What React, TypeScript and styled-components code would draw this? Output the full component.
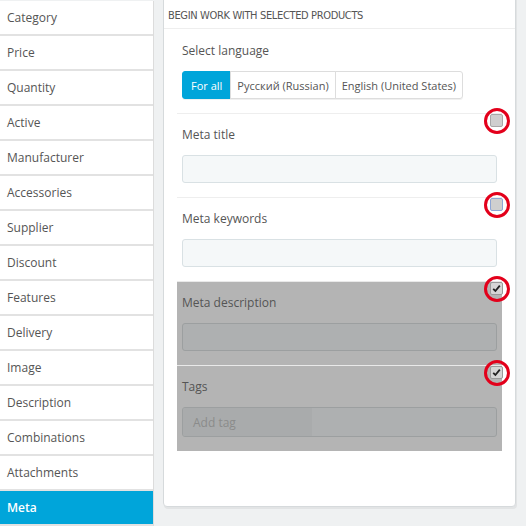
import React from "react";
import styled, { createGlobalStyle } from "styled-components";

const Global = createGlobalStyle`
  html, body { margin: 0; padding: 0; }
  body {
    background: #eff1f2;
    font-family: "Open Sans", "Noto Sans", sans-serif;
    font-size: 12px;
    color: #555;
    overflow: hidden;
  }
`;

const Page = styled.div`
  display: flex;
  width: 526px;
  height: 526px;
  overflow: hidden;
`;

const Sidebar = styled.nav`
  width: 153px;
  flex: none;
  background: #fff;
  border-right: 1px solid #dcdcdc;
  display: flex;
  flex-direction: column;
  margin-top: 1px;
`;

const NavItem = styled.div<{ $active?: boolean }>`
  height: 33px;
  flex: none;
  display: flex;
  align-items: center;
  padding-left: 7px;
  font-size: 12px;
  border-bottom: 2px solid #e2e2e2;
  background: ${(p) => (p.$active ? "#00a5da" : "#fff")};
  color: ${(p) => (p.$active ? "#fff" : "#555")};
  font-weight: ${(p) => (p.$active ? 600 : 400)};
`;

const Main = styled.main`
  flex: 1;
  padding: 0 10px 0 9px;
`;

const Panel = styled.section`
  margin-top: -2px;
  background: #fff;
  border: 1px solid #d6dadc;
  border-radius: 0 0 4px 4px;
  box-shadow: 1px 2px 0 rgba(0, 0, 0, 0.05);
`;

const PanelHeading = styled.header`
  height: 26px;
  display: flex;
  align-items: center;
  padding: 3px 4px 0;
  border-bottom: 1px solid #eeeeee;
  font-family: "DejaVu Sans Condensed", "DejaVu Sans", sans-serif;
  font-stretch: condensed;
  font-size: 11px;
  letter-spacing: -0.35px;
  text-transform: uppercase;
  color: #555;
`;

const PanelBody = styled.div`
  padding: 13px 13px 55px;
`;

const Block = styled.div`
  padding: 0 5px 14px;
`;

const Label = styled.div`
  font-size: 12px;
  line-height: 18px;
  color: #555;
  margin-bottom: 11px;
`;

const BtnGroup = styled.div`
  display: inline-flex;
  box-shadow: 0 1px 0 rgba(0, 0, 0, 0.06);
  border-radius: 3px;
`;

const LangBtn = styled.button<{ $active?: boolean }>`
  height: 28px;
  padding: 0 ${(p) => (p.$active ? "8px" : "6px")};
  font-family: "Open Sans", "Noto Sans", sans-serif;
  font-size: 11px;
  border: 1px solid ${(p) => (p.$active ? "#00a5da" : "#dddddd")};
  background: ${(p) => (p.$active ? "#00a5da" : "#fff")};
  color: ${(p) => (p.$active ? "#fff" : "#555")};
  margin-left: -1px;
  &:first-child { border-radius: 3px 0 0 3px; margin-left: 0; }
  &:last-child { border-radius: 0 3px 3px 0; }
`;

const Row = styled.div<{ $selected?: boolean }>`
  position: relative;
  border-top: 1px solid ${(p) => (p.$selected ? "#e9e9e9" : "#eeeeee")};
  padding: 12px 5px 14px;
  background: ${(p) => (p.$selected ? "#b4b4b4" : "transparent")};
`;

const Field = styled.div<{ $selected?: boolean; $tall?: boolean }>`
  height: ${(p) => (p.$tall ? "30px" : "28px")};
  box-sizing: border-box;
  border-radius: 3px;
  border: 1px solid ${(p) => (p.$selected ? "#9c9fa0" : "#d9e1e4")};
  background: ${(p) => (p.$selected ? "#aeb0b1" : "#f5f8f9")};
  display: flex;
  align-items: stretch;
  overflow: hidden;
`;

const TagInput = styled.div`
  width: 119px;
  display: flex;
  align-items: center;
  padding-left: 10px;
  background: #a9abac;
  color: #8b8b8b;
  font-size: 12px;
`;

const CheckSpot = styled.div`
  position: absolute;
  top: 0;
  right: -1px;
  width: 13px;
  height: 13px;
`;

const Box = styled.div<{ $focus?: boolean; $checked?: boolean }>`
  width: 13px;
  height: 13px;
  box-sizing: border-box;
  border-radius: 2px;
  border: 1px solid ${(p) => (p.$focus ? "#8ea6d6" : p.$checked ? "#9a9a9a" : "#a8a8a8")};
  background: ${(p) => (p.$checked ? "#d6d6d6" : "#cfcfcf")};
  display: flex;
  align-items: center;
  justify-content: center;
`;

const Ring = styled.span`
  position: absolute;
  left: 50%;
  top: 50%;
  width: 26px;
  height: 26px;
  margin: -13px 0 0 -13px;
  box-sizing: border-box;
  border: 3px solid #e3001b;
  border-radius: 50%;
`;

const Check = () => (
  <svg width="9" height="9" viewBox="0 0 9 9">
    <path d="M1.2 4.8 L3.4 7 L7.8 1.6" fill="none" stroke="#222" strokeWidth="1.8" />
  </svg>
);

const navItems = [
  "Category", "Price", "Quantity", "Active", "Manufacturer", "Accessories",
  "Supplier", "Discount", "Features", "Delivery", "Image", "Description",
  "Combinations", "Attachments", "Meta",
];

const rows = [
  { label: "Meta title", selected: false, focus: false },
  { label: "Meta keywords", selected: false, focus: true },
  { label: "Meta description", selected: true, focus: false },
  { label: "Tags", selected: true, focus: false, tags: true },
];

export default function App() {
  return (
    <>
      <Global />
      <Page>
        <Sidebar>
          {navItems.map((n) => (
            <NavItem key={n} $active={n === "Meta"}>{n}</NavItem>
          ))}
        </Sidebar>
        <Main>
          <Panel>
            <PanelHeading>Begin work with selected products</PanelHeading>
            <PanelBody>
              <Block>
                <Label>Select language</Label>
                <BtnGroup>
                  <LangBtn $active>For all</LangBtn>
                  <LangBtn>Русский (Russian)</LangBtn>
                  <LangBtn>English (United States)</LangBtn>
                </BtnGroup>
              </Block>
              {rows.map((r) => (
                <Row key={r.label} $selected={r.selected}>
                  <Label>{r.label}</Label>
                  <Field $selected={r.selected} $tall={r.tags}>
                    {r.tags && <TagInput>Add tag</TagInput>}
                  </Field>
                  <CheckSpot>
                    <Box $focus={r.focus} $checked={r.selected}>
                      {r.selected && <Check />}
                    </Box>
                    <Ring />
                  </CheckSpot>
                </Row>
              ))}
            </PanelBody>
          </Panel>
        </Main>
      </Page>
    </>
  );
}
